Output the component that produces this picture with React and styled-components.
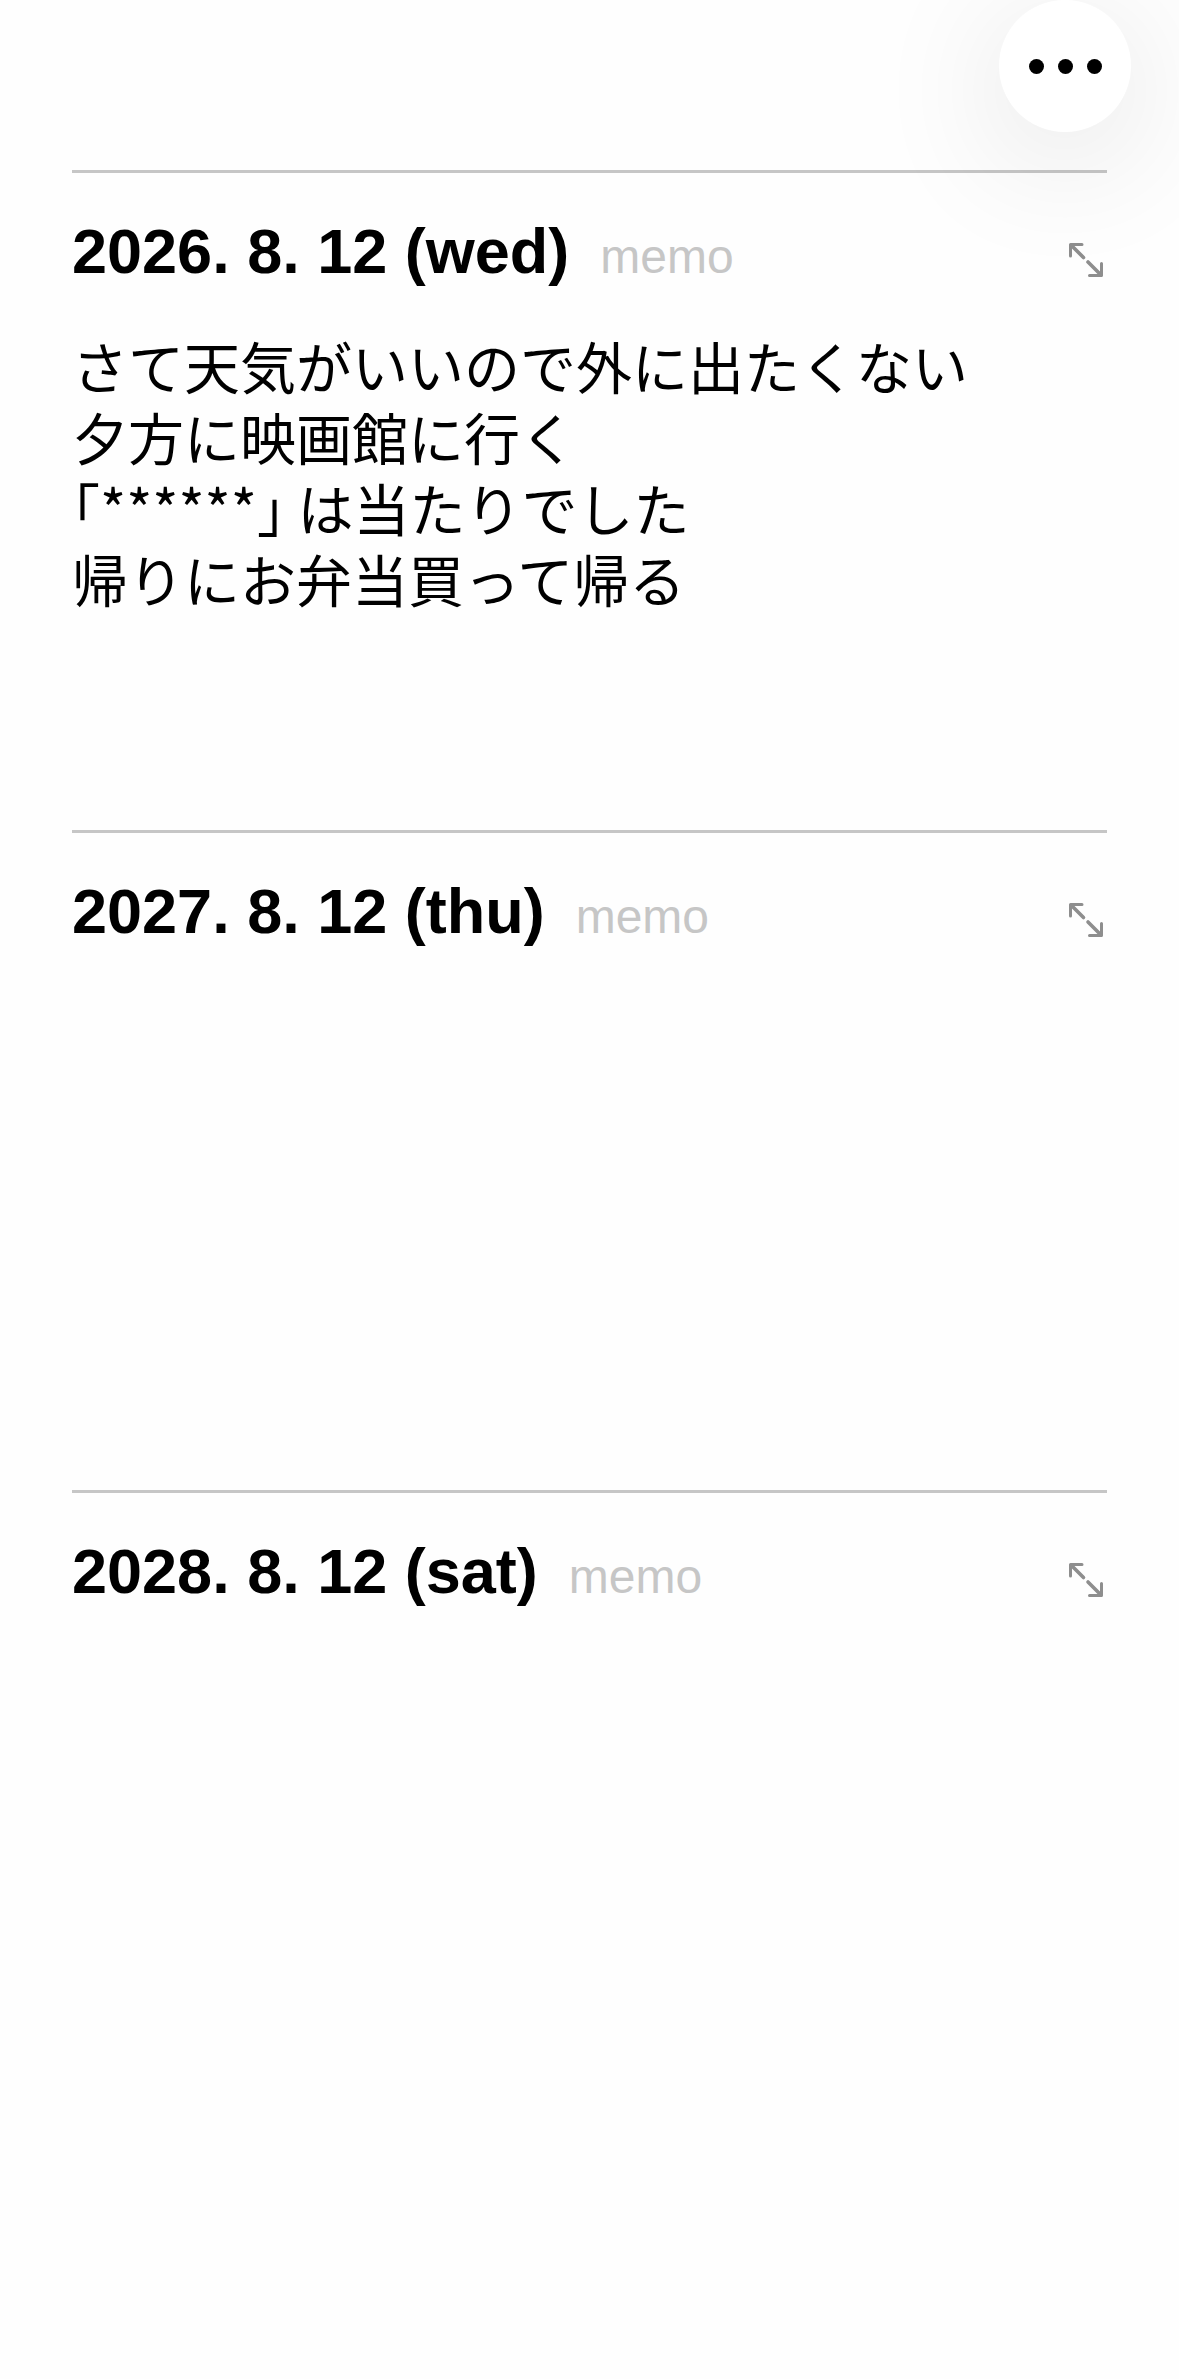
import React, { useState } from "react";
import styled, { createGlobalStyle } from "styled-components";

const GlobalStyle = createGlobalStyle`
  *, *::before, *::after { box-sizing: border-box; }
  body {
    margin: 0;
    background: #fefefe;
    color: #000;
    font-family: "Liberation Sans", Arial, "Noto Sans CJK JP", sans-serif;
  }
`;

const Page = styled.main`
  min-height: 100vh;
  padding: 170px 72px 0;
`;

const MenuButton = styled.button`
  position: fixed;
  top: 0;
  right: 48px;
  z-index: 1;
  display: flex;
  align-items: center;
  justify-content: center;
  gap: 14px;
  width: 132px;
  height: 132px;
  padding: 0;
  border: 0;
  border-radius: 50%;
  background: #fff;
  box-shadow: 0 24px 136px rgba(0, 0, 0, 0.12);
  cursor: pointer;
`;

const Dot = styled.span`
  width: 15px;
  height: 15px;
  border-radius: 50%;
  background: #000;
`;

const Entry = styled.section`
  min-height: 660px;
  border-top: 3px solid #c6c6c6;
`;

const EntryHeader = styled.header`
  display: flex;
  align-items: baseline;
  gap: 31px;
  padding-top: 42px;
`;

const EntryDate = styled.h2`
  margin: 0;
  font-size: 63px;
  font-weight: 700;
  line-height: 72px;
  white-space: nowrap;
`;

const MemoInput = styled.input`
  flex: 1;
  min-width: 0;
  height: 72px;
  padding: 0;
  border: 0;
  outline: 0;
  background: transparent;
  color: #000;
  font: inherit;
  font-size: 48px;

  &::placeholder {
    color: #c6c6c6;
    opacity: 1;
  }
`;

const ExpandButton = styled.button`
  align-self: flex-end;
  display: flex;
  margin-bottom: 12px;
  padding: 0;
  border: 0;
  background: none;
  color: #8e8e8e;
  cursor: pointer;
`;

const EntryText = styled.textarea`
  display: block;
  width: 100%;
  margin-top: 36px;
  padding: 0;
  border: 0;
  outline: 0;
  resize: none;
  overflow: hidden;
  background: transparent;
  color: #000;
  font-family: "Noto Sans CJK JP", sans-serif;
  font-size: 56px;
  font-weight: 400;
  line-height: 71px;
  font-feature-settings: "halt";
`;

const ExpandIcon = () => (
  <svg
    width="44"
    height="44"
    viewBox="0 0 44 44"
    fill="none"
    stroke="currentColor"
    strokeWidth="3"
    strokeLinecap="round"
    strokeLinejoin="round"
    aria-hidden="true"
  >
    <path d="M7.5 19V7.5H19M26.5 38.5H38.5V26.5" />
    <path strokeWidth="3.6" d="M8.5 8.5L20.5 20.5M25 25L37.5 37.5" />
  </svg>
);

const initialEntries = [
  {
    date: "2026. 8. 12 (wed)",
    text: "さて天気がいいので外に出たくない\n夕方に映画館に行く\n「******」 は当たりでした\n帰りにお弁当買って帰る",
  },
  { date: "2027. 8. 12 (thu)", text: "" },
  { date: "2028. 8. 12 (sat)", text: "" },
];

function DiaryEntry({ date, text }) {
  const [memo, setMemo] = useState("");
  const [body, setBody] = useState(text);
  return (
    <Entry>
      <EntryHeader>
        <EntryDate>{date}</EntryDate>
        <MemoInput
          aria-label={`Memo for ${date}`}
          placeholder="memo"
          value={memo}
          onChange={(e) => setMemo(e.target.value)}
        />
        <ExpandButton type="button" aria-label={`Expand ${date}`}>
          <ExpandIcon />
        </ExpandButton>
      </EntryHeader>
      <EntryText
        aria-label={`Diary for ${date}`}
        rows={6}
        spellCheck={false}
        value={body}
        onChange={(e) => setBody(e.target.value)}
      />
    </Entry>
  );
}

export default function App() {
  return (
    <>
      <GlobalStyle />
      <MenuButton type="button" aria-label="Menu">
        <Dot />
        <Dot />
        <Dot />
      </MenuButton>
      <Page>
        {initialEntries.map((entry) => (
          <DiaryEntry key={entry.date} {...entry} />
        ))}
      </Page>
    </>
  );
}
